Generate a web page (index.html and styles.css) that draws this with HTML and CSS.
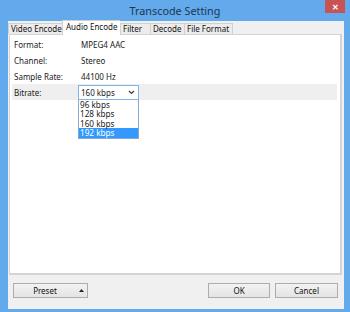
FILE: index.html
```html
<!DOCTYPE html>
<html>
<head>
<meta charset="utf-8">
<link rel="stylesheet" href="styles.css">
</head>
<body>
<div class="window">
  <div class="titlebar">
    <span class="spacer"></span>
    <span class="title">Transcode Setting</span>
    <span class="close-wrap"><span class="close">✕</span></span>
  </div>
  <div class="client">
    <div class="tabs">
      <span class="tab t1">Video Encode</span>
      <span class="tab t2 active">Audio Encode</span>
      <span class="tab t3">Filter</span>
      <span class="tab t4">Decode</span>
      <span class="tab t5">File Format</span>
    </div>
    <div class="panel">
      <div class="row"><span class="label">Format:</span><span class="value">MPEG4 AAC</span></div>
      <div class="row"><span class="label">Channel:</span><span class="value">Stereo</span></div>
      <div class="row"><span class="label">Sample Rate:</span><span class="value">44100 Hz</span></div>
      <div class="row sel-row"><span class="label">Bitrate:</span>
        <div class="combo">
          <div class="select"><span>160 kbps</span>
            <svg class="chev" width="7" height="5" viewBox="0 0 7 5"><path d="M1 1 L3.5 3.5 L6 1" fill="none" stroke="#333" stroke-width="1.1"/></svg>
          </div>
          <div class="list">
            <div class="item">96 kbps</div>
            <div class="item">128 kbps</div>
            <div class="item">160 kbps</div>
            <div class="item hl">192 kbps</div>
          </div>
        </div>
      </div>
    </div>
    <div class="buttons">
      <button class="btn preset"><span class="ptxt">Preset</span><svg class="tri" width="5" height="3" viewBox="0 0 5 3"><path d="M0 3 L2.5 0 L5 3 Z" fill="#222"/></svg></button>
      <span class="fill"></span>
      <button class="btn ok">OK</button>
      <button class="btn cancel">Cancel</button>
    </div>
  </div>
</div>
</body>
</html>
```
FILE: styles.css
```css
* { box-sizing: border-box; }
html, body { margin: 0; padding: 0; }
body { width: 350px; height: 312px; overflow: hidden; font-family: "Noto Sans", "Open Sans", sans-serif; }
.window {
  width: 350px; height: 312px;
  background: #62aaec;
  padding: 0 6px 3px 8px;
  display: flex; flex-direction: column;
}
.titlebar {
  height: 21px; margin: 0 -6px 0 -8px;
  display: grid; grid-template-columns: 1fr auto 1fr; align-items: start;
}
.title { font-size: 10.8px; color: #1d3651; line-height: 21px; }
.close-wrap { display: flex; justify-content: flex-end; padding-right: 5px; }
.close {
  width: 20px; height: 13px; background: #c75452; color: #fff;
  font-size: 8px; font-weight: bold; line-height: 13px; text-align: center;
}
.client {
  flex: 1; background: #f0f0f0;
  display: flex; flex-direction: column;
  padding: 2px 2px 0 0;
}
.tabs { display: flex; height: 11px; align-items: flex-end; position: relative; z-index: 1; }
.tab {
  height: 11px; border: 1px solid #d0d0d0; border-bottom: none; border-right: none;
  background: #ececec; font-size: 8px; color: #111; line-height: 10px;
  padding: 0 0 0 2px; white-space: nowrap; overflow: hidden;
}
.tab.t5 { border-right: 1px solid #d0d0d0; }
.tab.active { margin-top: -3px; background: #fff; margin-bottom: -1px; height: 15px; line-height: 12px; padding-left: 3px; }
.t1 { width: 54px; }
.t2 { width: 58px; }
.t3 { width: 30px; }
.t4 { width: 34px; }
.t5 { width: 49px; }
.panel {
  height: 241px; margin-left: 1px; background: #fff;
  border: 1px solid #d4d4d4; border-right: 2px solid #d4d4d4; border-bottom: 2px solid #d4d4d4;
  padding: 1px 2px 0 2px;
  display: flex; flex-direction: column;
}
.row { height: 16px; display: flex; align-items: center; font-size: 8px; color: #1a1a1a; padding-left: 2px; }
.label { width: 67px; }
.sel-row { background: #efefef; margin-right: 1px; }
.combo { margin-left: -3px; position: relative; }
.select {
  width: 61px; height: 15px; border: 1px solid #7eb4ea; background: #fff;
  display: flex; align-items: center; justify-content: space-between; padding: 0 3px 0 2px;
}
.chev { margin-top: 1px; }
.list {
  position: absolute; left: 0; top: 15px; width: 61px;
  border: 1px solid #8aa8c8; border-top: none; background: #fff; z-index: 2;
}
.item { height: 9.5px; line-height: 9.5px; padding-left: 1px; font-size: 8.2px; }
.item.hl { background: #3399ff; color: #fff; }
.buttons { display: flex; align-items: center; padding: 8px 4px 0 5px; }
.btn {
  height: 15px; border: 1px solid #adadad; background: linear-gradient(#f2f2f2, #e4e4e4);
  font-family: "Noto Sans", sans-serif; font-size: 8px; color: #111; padding: 0; line-height: 12px;
}
.preset { width: 75px; display: flex; align-items: center; }
.ptxt { width: 62px; text-align: center; }
.tri { margin-left: 3px; }
.fill { flex: 1; }
.ok { width: 62px; }
.cancel { width: 63px; margin-left: 5px; }
```
